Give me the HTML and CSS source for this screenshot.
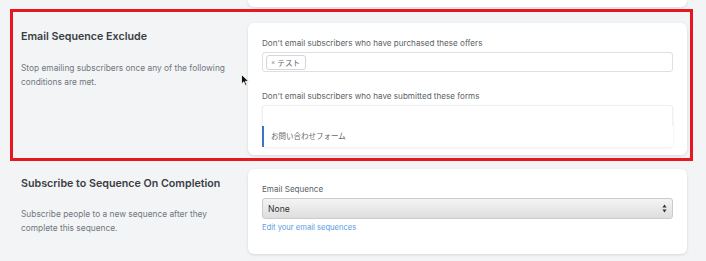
FILE: index.html
```html
<!DOCTYPE html>
<html lang="en">
<head>
    <meta charset="UTF-8">
    <meta name="viewport" content="width=device-width, initial-scale=1.0">
    <title>Sequence Settings</title>
    <link rel="stylesheet" href="styles.css">
</head>
<body>
    <div class="card card-stub"></div>

    <div class="section highlight">
        <div class="section-info">
            <h2>Email Sequence Exclude</h2>
            <p>Stop emailing subscribers once any of the following conditions are met.</p>
        </div>
        <div class="card card-exclude">
            <label class="field-label">Don't email subscribers who have purchased these offers</label>
            <div class="tag-input">
                <span class="tag"><span class="tag-x">×</span>テスト</span>
            </div>
            <label class="field-label second">Don't email subscribers who have submitted these forms</label>
            <div class="multi-select">
                <div class="multi-search"></div>
                <div class="multi-option">お問い合わせフォーム</div>
            </div>
        </div>
    </div>

    <div class="section next">
        <div class="section-info">
            <h2>Subscribe to Sequence On Completion</h2>
            <p>Subscribe people to a new sequence after they complete this sequence.</p>
        </div>
        <div class="card card-sequence">
            <label class="field-label">Email Sequence</label>
            <div class="select-box">
                <span>None</span>
                <span class="select-arrows">
                    <svg width="5" height="9" viewBox="0 0 5 9"><path d="M2.5 0.5 L4.6 3.6 H0.4 Z M2.5 8.5 L4.6 5.4 H0.4 Z" fill="#333"/></svg>
                </span>
            </div>
            <a class="edit-link" href="#">Edit your email sequences</a>
        </div>
    </div>

    <!-- mouse pointer captured in screenshot -->
    <svg class="cursor" width="9" height="13" viewBox="0 0 9 13">
        <path d="M0.5 0.5 L0.5 10 L2.8 7.8 L4.4 11.6 L5.9 11 L4.3 7.3 L7.6 7.3 Z" fill="#111" stroke="#fff" stroke-width="0.8"/>
    </svg>
</body>
</html>
```

FILE: styles.css
```css
body {
    margin: 0;
    background-color: #f3f4f6;
    font-family: Inter, "Noto Sans", "Noto Sans CJK JP", sans-serif;
    color: #333;
    position: relative;
    height: 261px;
    overflow: hidden;
}
.card {
    background: #fff;
    border-radius: 6px;
    box-shadow: 0 1px 3px rgba(0,0,0,0.12);
    width: 439px;
    box-sizing: border-box;
}
.card-stub {
    height: 7px;
    margin-left: 248px;
    border-radius: 0 0 6px 6px;
}
.section {
    display: flex;
    margin: 2px 13px 0 10px;
    border: 3px solid transparent;
    padding: 11px 3px 3px 8px;
}
.section.highlight {
    border-color: #e8161f;
}
.section.next {
    margin-top: 0;
    padding-top: 5px;
}
.section-info {
    width: 227px;
    padding-right: 8px;
    box-sizing: border-box;
}
.section-info h2 {
    margin: 6px 0 0;
    font-size: 10.7px;
    line-height: 16px;
    font-weight: 600;
    color: #3a3e44;
}
.section-info p {
    margin: 16px 0 0;
    font-size: 8.35px;
    line-height: 14px;
    color: #71767d;
}
.section.next .section-info h2 {
    margin-top: 7px;
}
.section.next .section-info p {
    margin-top: 15px;
}
.card-exclude {
    padding: 14px 14px 8px;
}
.card-sequence {
    padding: 14px 14px 19px;
}
.field-label {
    display: block;
    font-size: 8.1px;
    line-height: 12px;
    color: #5a5f66;
}
.field-label.second {
    margin-top: 18px;
}
.tag-input {
    margin-top: 3px;
    height: 20px;
    border: 1px solid #dcdfe3;
    border-radius: 3px;
    box-sizing: border-box;
    padding: 2px 3px;
    display: flex;
    align-items: center;
}
.tag {
    display: inline-flex;
    align-items: center;
    height: 15px;
    padding: 0 5px 0 4px;
    border: 1px solid #d4d6d9;
    border-radius: 3px;
    box-sizing: border-box;
    font-size: 7.6px;
    color: #666;
}
.tag-x {
    font-size: 6.5px;
    margin-right: 2px;
    color: #888;
}
.multi-select {
    margin-top: 3px;
    border-radius: 3px;
    box-shadow: 0 1px 3px rgba(0,0,0,0.08);
}
.multi-search {
    height: 21px;
    border: 1px solid #eef0f2;
    border-bottom: none;
    border-radius: 3px 3px 0 0;
    box-sizing: border-box;
}
.multi-option {
    height: 21px;
    border-left: 2px solid #3d74c6;
    padding-left: 7px;
    font-size: 7.5px;
    line-height: 21px;
    color: #666;
    background: #fff;
}
.select-box {
    margin-top: 3px;
    height: 21px;
    border: 1px solid #c9cbce;
    border-radius: 3px;
    box-sizing: border-box;
    background: linear-gradient(#f4f4f4, #dedede);
    display: flex;
    align-items: center;
    justify-content: space-between;
    padding: 0 5px 0 5px;
    font-size: 8.6px;
    color: #333;
}
.select-arrows {
    display: flex;
}
.edit-link {
    display: block;
    margin-top: 2px;
    font-size: 7.6px;
    line-height: 14px;
    color: #5b9be0;
    text-decoration: none;
}
.cursor {
    position: absolute;
    left: 241px;
    top: 74px;
}
```
